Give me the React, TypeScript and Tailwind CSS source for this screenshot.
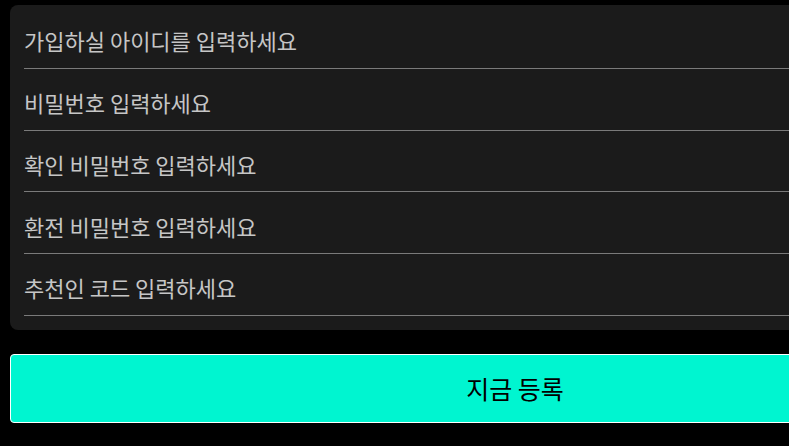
import React from 'react';

const fields = [
  '가입하실 아이디를 입력하세요',
  '비밀번호 입력하세요',
  '확인 비밀번호 입력하세요',
  '환전 비밀번호 입력하세요',
  '추천인 코드 입력하세요',
];

export default function App() {
  return (
    <div
      className="min-h-[446px] bg-black"
      style={{ fontFamily: '"Noto Sans CJK KR", "Noto Sans", sans-serif' }}
    >
      <div className="w-[1030px] px-[10px] pt-[5px]">
        {/* Input panel */}
        <div className="rounded-lg bg-[#1b1b1b] px-[14px] pt-[2px] pb-[14px]">
          {fields.map((placeholder) => (
            <div
              key={placeholder}
              className="flex h-[61.75px] items-center border-b border-[#7a7a7a] pt-[7px]"
            >
              <input
                className="w-full bg-transparent text-[22px] text-[#c6c6c6] outline-none placeholder:text-[#c6c6c6]"
                placeholder={placeholder}
              />
            </div>
          ))}
        </div>

        {/* Submit */}
        <button className="mt-[24px] flex h-[69px] w-full items-center justify-center rounded border border-white bg-[#00f5d0] text-[25px] text-black">
          지금 등록
        </button>
      </div>
    </div>
  );
}
